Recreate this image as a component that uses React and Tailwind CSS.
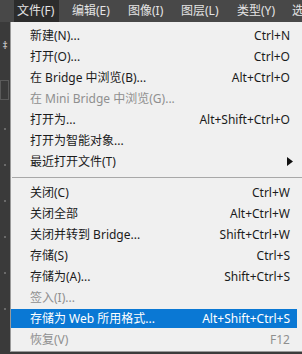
import React from "react";

const font = { fontFamily: '"Noto Sans", "Noto Sans CJK SC", sans-serif' };

const group1 = [
  ["新建(N)...", "Ctrl+N"],
  ["打开(O)...", "Ctrl+O"],
  ["在 Bridge 中浏览(B)...", "Alt+Ctrl+O"],
  ["在 Mini Bridge 中浏览(G)...", "", "disabled"],
  ["打开为...", "Alt+Shift+Ctrl+O"],
  ["打开为智能对象..."],
  ["最近打开文件(T)", "", "sub"],
];

const group2 = [
  ["关闭(C)", "Ctrl+W"],
  ["关闭全部", "Alt+Ctrl+W"],
  ["关闭并转到 Bridge...", "Shift+Ctrl+W"],
  ["存储(S)", "Ctrl+S"],
  ["存储为(A)...", "Shift+Ctrl+S"],
  ["签入(I)...", "", "disabled"],
  ["存储为 Web 所用格式...", "Alt+Shift+Ctrl+S", "active"],
  ["恢复(V)", "F12", "disabled"],
];

function Row({ label, shortcut, kind }) {
  if (kind === "active") {
    return (
      <div className="h-[21px] flex items-center pr-[5px]">
        <div className="h-[19px] flex-1 flex items-center justify-between bg-[#0a78d4] text-white pl-[19px] pr-[7px] whitespace-nowrap">
          <span>{label}</span>
          <span>{shortcut}</span>
        </div>
      </div>
    );
  }
  const color = kind === "disabled" ? "text-[#8f8f8f]" : "text-[#1b1b1b]";
  return (
    <div className={`h-[21px] flex items-center justify-between pl-[19px] pr-[12px] whitespace-nowrap ${color}`}>
      <span>{label}</span>
      {kind === "sub" ? (
        <svg width="6" height="9" viewBox="0 0 6 9" className="mr-[-3px]">
          <path d="M0 0 L6 4.5 L0 9 Z" fill="#111" />
        </svg>
      ) : (
        <span>{shortcut}</span>
      )}
    </div>
  );
}

export default function App() {
  return (
    <div className="w-[302px] h-[354px] bg-[#3b3b3b] overflow-hidden flex flex-col" style={font}>
      <div className="h-[22px] flex items-center bg-[#484848] text-[#e4e4e4] text-[12px] shrink-0 whitespace-nowrap overflow-hidden">
        <div className="w-[14px] shrink-0" />
        <div className="h-[22px] flex items-center pl-[3px] bg-[#2c2c2c] w-[45px] shrink-0">文件(F)</div>
        <span className="ml-[13px] w-[56px] shrink-0">编辑(E)</span>
        <span className="w-[53px] shrink-0">图像(I)</span>
        <span className="w-[56px] shrink-0">图层(L)</span>
        <span className="w-[55px] shrink-0">类型(Y)</span>
        <span className="shrink-0">选</span>
      </div>
      <div className="flex flex-1">
        <div className="w-[10px] bg-[#3a3a3a] flex flex-col items-center">
          <span className="text-[#dcdcdc] text-[10px] leading-none mt-[18px]">‡</span>
          <div className="w-[9px] h-[20px] border border-[#5a5a5a] mt-[30px] ml-[-2px]" />
          <div className="flex flex-col gap-[34px] mt-[28px]">
            {[0, 1, 2, 3, 4, 5].map((i) => (
              <div key={i} className="w-[2px] h-[2px] bg-[#6a6a6a]" />
            ))}
          </div>
        </div>
        <div className="w-[292px] h-[330px] bg-[#f0f0f0] border-l border-b border-[#9a9a9a] text-[12px] pt-[3px]">
          {group1.map(([l, s, k]) => (
            <Row key={l} label={l} shortcut={s} kind={k} />
          ))}
          <div className="h-[10px] flex items-center pl-[1px]">
            <div className="w-full h-[1px] bg-[#a8a8a8]" />
          </div>
          {group2.map(([l, s, k]) => (
            <Row key={l} label={l} shortcut={s} kind={k} />
          ))}
        </div>
      </div>
    </div>
  );
}
